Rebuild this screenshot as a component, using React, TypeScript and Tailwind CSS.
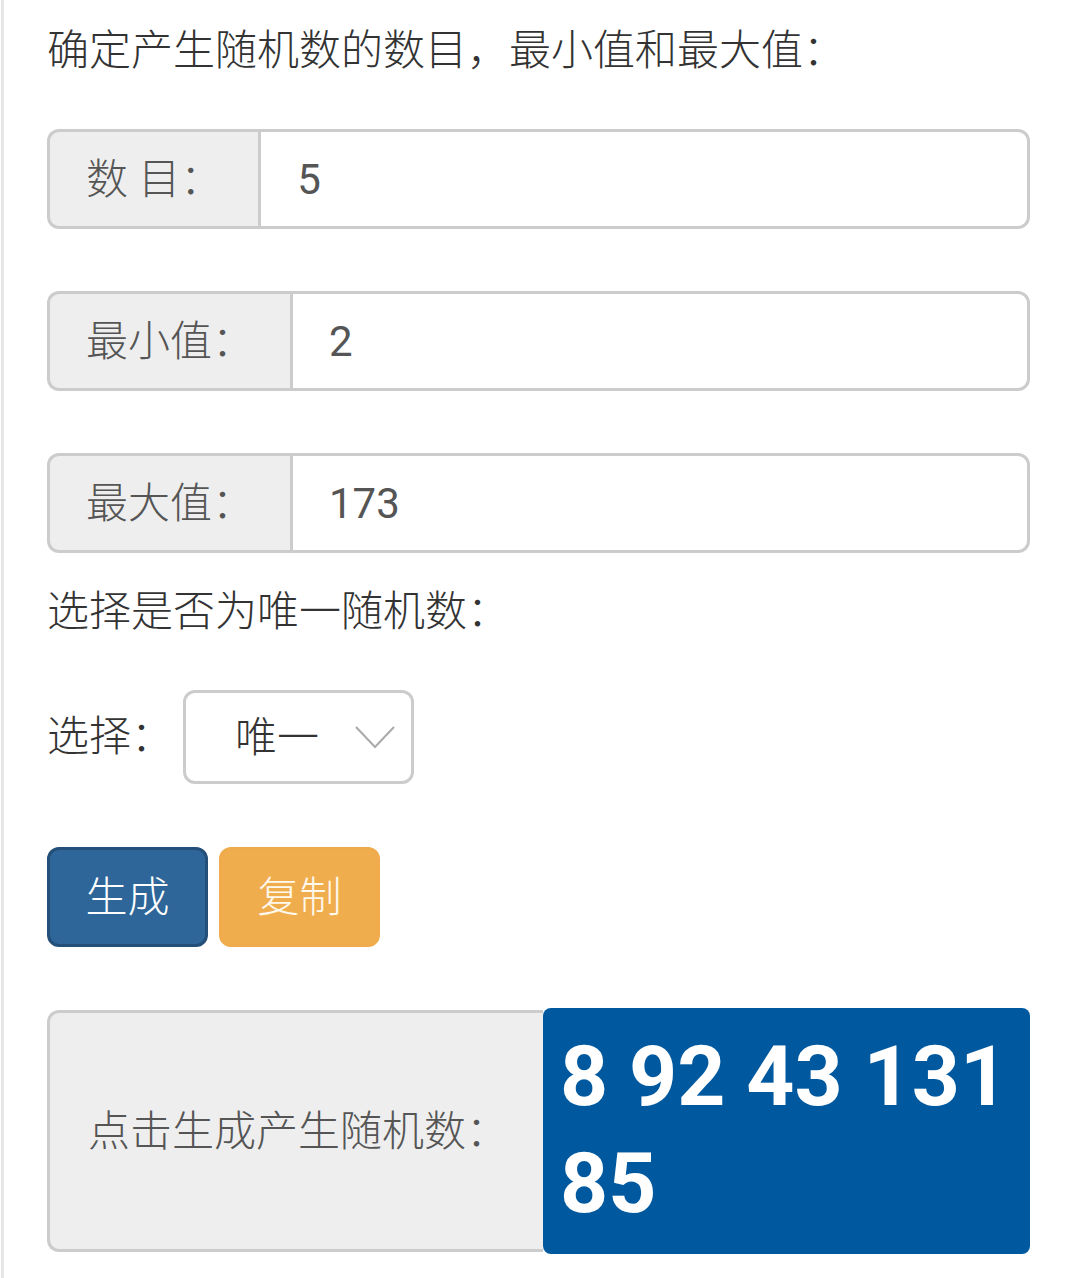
const font = "font-['Roboto','Noto_Sans_CJK_SC',sans-serif]";

function Field({ label, value }: { label: string; value: string }) {
  return (
    <div className="flex h-[100px]">
      <div className="flex items-center whitespace-nowrap rounded-l-[12px] border-[3px] border-r-0 border-[#ccc] bg-[#eee] px-[36px] text-[42px] font-light text-[#555]">
        {label}
      </div>
      <div className="flex flex-1 items-center rounded-r-[12px] border-[3px] border-[#ccc] bg-white px-[36px] text-[42px] text-[#555]">
        {value}
      </div>
    </div>
  );
}

export default function App() {
  return (
    <div className={`${font} min-h-screen bg-white`}>
      <div className="ml-[1px] min-h-screen border-l-[3px] border-[#e6e6e6] pb-[25px] pl-[43px] pr-[39px] pt-[21px] text-[#333]">
        <p className="h-[60px] text-[42px] font-light leading-[60px]">确定产生随机数的数目，最小值和最大值：</p>

        <div className="mt-[48px]">
          <Field label="数 目：" value="5" />
        </div>
        <div className="mt-[62px]">
          <Field label="最小值：" value="2" />
        </div>
        <div className="mt-[62px]">
          <Field label="最大值：" value="173" />
        </div>

        <p className="mt-[29px] h-[60px] text-[42px] font-light leading-[60px]">选择是否为唯一随机数：</p>

        <div className="mt-[48px] flex items-center">
          <span className="text-[42px] font-light leading-[60px]">选择：</span>
          <div className="ml-[10px] flex h-[94px] w-[231px] items-center rounded-[12px] border-[3px] border-[#ccc] bg-white pl-[49px] pr-[16px]">
            <span className="text-[42px] font-light text-[#333]">唯一</span>
            <svg className="ml-auto" width="40" height="24" viewBox="0 0 40 24" fill="none">
              <path d="M1 2 L20 22 L39 2" stroke="#aaa" strokeWidth="2" />
            </svg>
          </div>
        </div>

        <div className="mt-[63px] flex gap-[11px]">
          <button className="flex h-[100px] w-[161px] items-center justify-center rounded-[12px] border-[3px] border-[#234f79] bg-[#2e6699] text-[42px] font-light text-white">
            生成
          </button>
          <button className="flex h-[100px] w-[161px] items-center justify-center rounded-[12px] border-[3px] border-[#efab4c] bg-[#f0ad4e] text-[42px] font-light text-[#fff8ec]">
            复制
          </button>
        </div>

        <div className="mt-[61px] flex">
          <div className="my-[2px] flex w-[496px] shrink-0 items-center whitespace-nowrap rounded-l-[12px] border-[3px] border-r-0 border-[#ccc] bg-[#eee] pl-[38px] text-[42px] font-light text-[#555]">
            点击生成产生随机数：
          </div>
          <div className="flex-1 rounded-[8px] bg-[#00599f] px-[17px] pb-[17px] pt-[15px] text-[84px] font-bold leading-[107px] text-white">
            8 92 43 131 85
          </div>
        </div>
      </div>
    </div>
  );
}
